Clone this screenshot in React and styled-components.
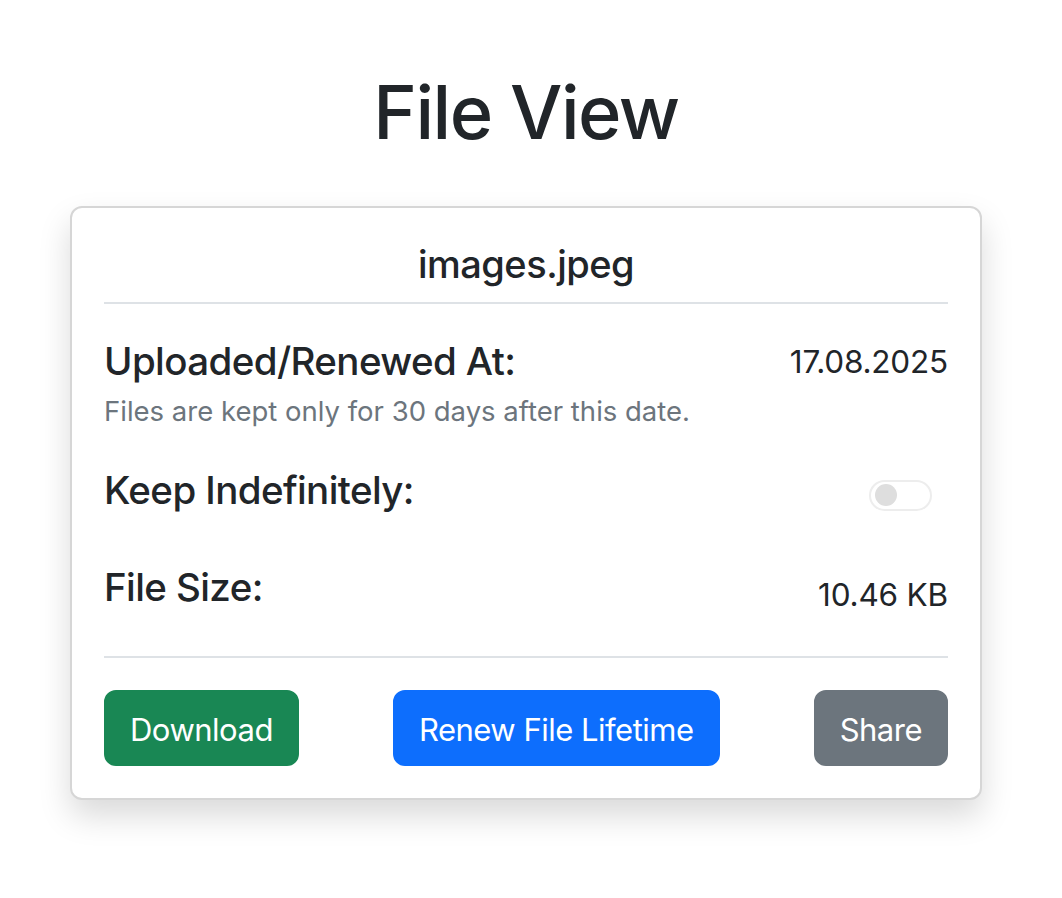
import React, { useState } from 'react';
import styled, { createGlobalStyle } from 'styled-components';

const GlobalStyle = createGlobalStyle`
    body {
        margin: 0;
        background: #fff;
        font-family: Inter, "Noto Sans", "Liberation Sans", sans-serif;
        color: #212529;
    }
`;

const Page = styled.div`
    padding: 68px 10px 60px 0;
    display: flex;
    flex-direction: column;
    align-items: center;
`;

const Title = styled.h1`
    margin: 0 0 49px;
    font-size: 74px;
    font-weight: 500;
    line-height: 1.2;
    letter-spacing: -1.5px;
`;

const Card = styled.div`
    width: 912px;
    box-sizing: border-box;
    border: 2px solid #d6d6d6;
    border-radius: 12px;
    padding: 32px;
    background: #fff;
    box-shadow: 0 16px 32px rgba(0, 0, 0, 0.15);
`;

const FileName = styled.h5`
    margin: 0 0 15px;
    padding-top: 2px;
    text-align: center;
    font-size: 38px;
    font-weight: 500;
    line-height: 1.2;
    letter-spacing: -0.5px;
`;

const Divider = styled.hr`
    margin: ${p => p.$top || 0}px 0 0;
    border: none;
    border-top: 2px solid #dee2e6;
`;

const Row = styled.div`
    display: flex;
    justify-content: space-between;
    align-items: flex-start;
    margin-top: ${p => p.$top}px;
`;

const Label = styled.div`
    padding-top: 2px;
    font-size: 38.5px;
    font-weight: 500;
    line-height: 1.2;
    letter-spacing: -0.6px;
`;

const Value = styled.div`
    font-size: 31.5px;
    line-height: 1.5;
    letter-spacing: -0.2px;
    margin-top: ${p => p.$offset}px;
`;

const Hint = styled.div`
    margin-top: 6px;
    font-size: 27.5px;
    line-height: 1.5;
    color: #6c757d;
`;

const Switch = styled.button`
    width: 63px;
    height: 31px;
    margin: 15px 16px 0 0;
    padding: 0 0 0 4px;
    box-sizing: border-box;
    border: 2px solid #ededed;
    border-radius: 16px;
    background: #fff;
    display: flex;
    align-items: center;
    justify-content: ${p => (p.$on ? 'flex-end' : 'flex-start')};
    cursor: default;

    span {
        width: 22px;
        height: 22px;
        border-radius: 50%;
        background: #dedede;
    }
`;

const Actions = styled.div`
    display: flex;
    justify-content: space-between;
    margin-top: 32px;
`;

const Button = styled.button`
    font-family: inherit;
    font-size: 31px;
    line-height: 48px;
    padding: 14px 24px 10px;
    border: 2px solid ${p => p.$color};
    border-radius: 12px;
    background: ${p => p.$color};
    color: #fff;
    letter-spacing: -0.5px;
    cursor: pointer;
`;

export default function App() {
    const [keep, setKeep] = useState(false);

    return (
        <Page>
            <GlobalStyle />
            <Title>File View</Title>
            <Card>
                <FileName>images.jpeg</FileName>
                <Divider />
                <Row $top={32}>
                    <div>
                        <Label>Uploaded/Renewed At:</Label>
                        <Hint>Files are kept only for 30 days after this date.</Hint>
                    </div>
                    <Value $offset={2}>17.08.2025</Value>
                </Row>
                <Row $top={33}>
                    <Label>Keep Indefinitely:</Label>
                    <Switch $on={keep} disabled onClick={() => setKeep(!keep)}>
                        <span />
                    </Switch>
                </Row>
                <Row $top={49}>
                    <Label>File Size:</Label>
                    <Value $offset={9}>10.46 KB</Value>
                </Row>
                <Divider $top={38} />
                <Actions>
                    <Button $color="#198754">Download</Button>
                    <Button $color="#0d6efd">Renew File Lifetime</Button>
                    <Button $color="#6c757d">Share</Button>
                </Actions>
            </Card>
        </Page>
    );
}
